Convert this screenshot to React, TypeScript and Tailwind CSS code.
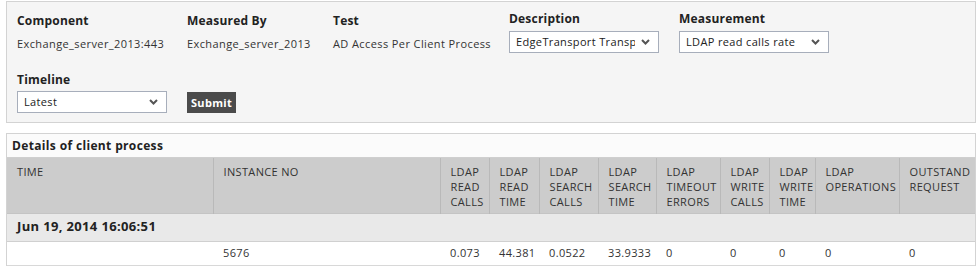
import React from 'react'

const font = { fontFamily: '"Open Sans", "DejaVu Sans", sans-serif' }

const Chevron = () => (
  <svg width="9" height="6" viewBox="0 0 9 6" className="shrink-0">
    <polyline points="1,1 4.5,4.5 8,1" fill="none" stroke="#555" strokeWidth="2" />
  </svg>
)

const Select: React.FC<{ value: string; width?: string }> = ({ value, width = 'w-[150px]' }) => (
  <div className={`${width} h-[22px] bg-white border border-[#a7aebb] flex items-center pl-[6px] pr-[8px] overflow-hidden`}>
    <span className="flex-1 min-w-0 mr-[6px] text-[11px] tracking-[0.35px] text-[#222] whitespace-nowrap overflow-hidden">{value}</span>
    <Chevron />
  </div>
)

const Info: React.FC<{ label: string; value: string; width: string }> = ({ label, value, width }) => (
  <div className={`${width} flex flex-col`}>
    <div className="mt-[2px] text-[12px] tracking-[0.2px] leading-[15px] font-bold text-[#222]">{label}</div>
    <div className="mt-[8px] text-[11px] tracking-[0.4px] leading-[15px] text-[#333]">{value}</div>
  </div>
)

const Picker: React.FC<{ label: string; value: string; width: string }> = ({ label, value, width }) => (
  <div className={`${width} flex flex-col`}>
    <div className="text-[12px] tracking-[0.2px] leading-[15px] font-bold text-[#222]">{label}</div>
    <div className="mt-[5px]">
      <Select value={value} />
    </div>
  </div>
)

const columns = [
  { label: 'TIME', w: 206 },
  { label: 'INSTANCE NO', w: 227 },
  { label: 'LDAP READ CALLS', w: 49 },
  { label: 'LDAP READ TIME', w: 50 },
  { label: 'LDAP SEARCH CALLS', w: 59 },
  { label: 'LDAP SEARCH TIME', w: 58 },
  { label: 'LDAP TIMEOUT ERRORS', w: 64 },
  { label: 'LDAP WRITE CALLS', w: 49 },
  { label: 'LDAP WRITE TIME', w: 46 },
  { label: 'LDAP OPERATIONS', w: 84 },
  { label: 'OUTSTAND REQUEST', w: 76 },
]

const values = ['', '5676', '0.073', '44.381', '0.0522', '33.9333', '0', '0', '0', '0', '0']

export default function App() {
  return (
    <div className="w-[980px] h-[266px] bg-white overflow-hidden pt-[1px]" style={font}>
      {/* filter panel */}
      <div className="ml-[6px] w-[970px] h-[122px] border border-[#d3d3d3] bg-[#f5f5f5] pl-[10px] pt-[9px]">
        <div className="flex">
          <Info label="Component" value="Exchange_server_2013:443" width="w-[170px]" />
          <Info label="Measured By" value="Exchange_server_2013" width="w-[146px]" />
          <Info label="Test" value="AD Access Per Client Process" width="w-[176px]" />
          <Picker label="Description" value="EdgeTransport Transport" width="w-[170px]" />
          <Picker label="Measurement" value="LDAP read calls rate" width="w-[170px]" />
        </div>
        <div className="flex mt-[19px]">
          <div className="w-[170px] flex flex-col">
            <div className="text-[12px] tracking-[0.2px] leading-[15px] font-bold text-[#222]">Timeline</div>
            <div className="mt-[4px]">
              <Select value="Latest" />
            </div>
          </div>
          <div className="flex items-end">
            <button className="h-[21px] px-[4px] bg-[#4b4b4b] text-white text-[11px] tracking-[0.3px] font-bold leading-none">Submit</button>
          </div>
        </div>
      </div>

      {/* details panel */}
      <div className="ml-[6px] mt-[10px] w-[970px] border border-[#d3d3d3] bg-white">
        <div className="h-[24px] flex items-center pl-[5px] bg-[#fbfbfb] border-b border-[#cfcfcf] text-[12px] tracking-[0.35px] font-bold text-[#222]">
          Details of client process
        </div>
        <table className="table-fixed border-collapse text-[11px] tracking-[0.35px] text-[#333]">
          <colgroup>
            {columns.map((c) => (
              <col key={c.label} style={{ width: c.w }} />
            ))}
          </colgroup>
          <thead>
            <tr className="h-[55px] bg-[#cccccc] border-b border-[#c4c4c4]">
              {columns.map((c, i) => (
                <th
                  key={c.label}
                  className={`align-top text-left font-normal leading-[15px] pt-[6px] pl-[10px] pr-[1px] ${i < columns.length - 1 ? 'border-r border-[#b9b9b9]' : ''}`}
                >
                  {c.label}
                </th>
              ))}
            </tr>
          </thead>
          <tbody>
            <tr className="h-[28px] bg-[#e9e9e9] border-b border-[#d0d0d0]">
              <td colSpan={columns.length} className="pl-[10px] font-bold text-[#222] text-[13px]">
                Jun 19, 2014 16:06:51
              </td>
            </tr>
            <tr className="h-[24px] bg-white border-b border-[#d8d8d8]">
              {values.map((v, i) => (
                <td key={i} className="pl-[10px]">{v}</td>
              ))}
            </tr>
          </tbody>
        </table>
      </div>
    </div>
  )
}
